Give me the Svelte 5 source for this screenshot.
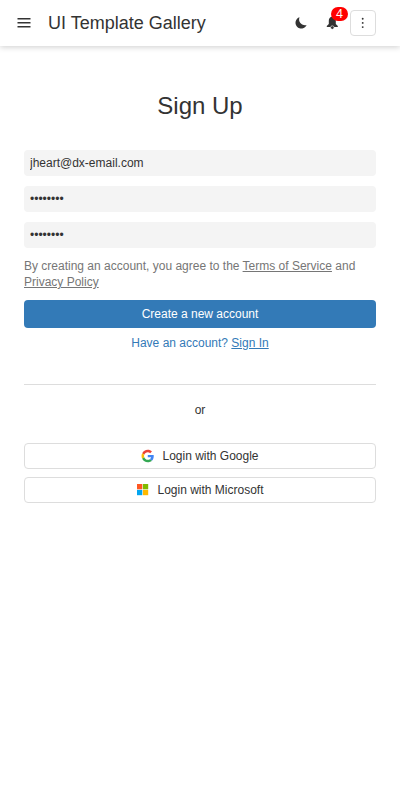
<script>
  let email = $state('jheart@dx-email.com');
  let password = $state('password');
  let confirmation = $state('password');
</script>

<div class="app">
  <header>
    <button class="icon menu" aria-label="Menu">
      <svg width="14" height="12" viewBox="0 0 14 12"><path d="M.5 1.8h13M.5 5.8h13M.5 9.8h13" stroke="#333" stroke-width="1.6" /></svg>
    </button>
    <div class="title">UI Template Gallery</div>
    <button class="icon theme" aria-label="Theme">
      <svg width="12" height="12" viewBox="0 0 12 12"><path d="M4.5.3A5.75 5.75 0 1 0 11.6 7.9C7.8 9.2 2.6 5.6 4.5.3Z" fill="#333" /></svg>
    </button>
    <button class="icon bell" aria-label="Notifications">
      <svg width="12" height="14" viewBox="0 0 12 14"><path d="M6.3.8C8.6.8 9.8 2.5 9.8 4.8V8L11.8 10V11H.8V10L2.8 8V4.8C2.8 2.5 4 .8 6.3.8Z" fill="#333" /><circle cx="6.3" cy="11.6" r="1.75" fill="#333" stroke="#fff" stroke-width=".6" /></svg>
      <span class="badge">4</span>
    </button>
    <button class="more" aria-label="More">
      <svg width="4" height="12" viewBox="0 0 4 12" fill="#333"><circle cx="1.7" cy="1.7" r=".95" /><circle cx="1.7" cy="5.9" r=".95" /><circle cx="1.7" cy="10.1" r=".95" /></svg>
    </button>
  </header>

  <main>
    <h1>Sign Up</h1>
    <form>
      <input type="email" aria-label="Email" bind:value={email} />
      <input type="password" aria-label="Password" bind:value={password} />
      <input type="password" aria-label="Confirm password" bind:value={confirmation} />
      <p class="policy">By creating an account, you agree to the <a href="#terms">Terms of Service</a> and <a href="#privacy">Privacy Policy</a></p>
      <button class="create" type="button">Create a new account</button>
      <div class="signin">Have an account? <a href="#signin">Sign In</a></div>
    </form>
    <hr />
    <div class="or">or</div>
    <button class="social">
      <svg width="13" height="14" viewBox="-2 -1 50 50">
        <path fill="#EA4335" d="M24 9.5c3.54 0 6.71 1.22 9.21 3.6l6.85-6.85C35.9 2.38 30.47 0 24 0 14.62 0 6.51 5.38 2.56 13.22l7.98 6.19C12.43 13.72 17.74 9.5 24 9.5z" />
        <path fill="#4285F4" d="M46.98 24.55c0-1.57-.15-3.09-.38-4.55H24v9.02h12.94c-.58 2.96-2.26 5.48-4.78 7.18l7.73 6c4.51-4.18 7.09-10.36 7.09-17.65z" />
        <path fill="#FBBC05" d="M10.53 28.59c-.48-1.45-.76-2.99-.76-4.59s.27-3.14.76-4.59l-7.98-6.19C.92 16.46 0 20.12 0 24c0 3.88.92 7.54 2.56 10.78l7.97-6.19z" />
        <path fill="#34A853" d="M24 48c6.48 0 11.93-2.13 15.89-5.81l-7.73-6c-2.15 1.45-4.92 2.3-8.16 2.3-6.26 0-11.57-4.22-13.47-9.91l-7.98 6.19C6.51 42.62 14.62 48 24 48z" />
      </svg>
      <span>Login with Google</span>
    </button>
    <button class="social microsoft">
      <svg width="13" height="14" viewBox="0 0 13 14">
        <path fill="#ff5722" d="M1 1h5.3v5.3H1z" /><path fill="#7fba00" d="M6.9 1h5.3v5.3H6.9z" />
        <path fill="#03a5f0" d="M1 6.9h5.3v5.3H1z" /><path fill="#ffb900" d="M6.9 6.9h5.3v5.3H6.9z" />
      </svg>
      <span>Login with Microsoft</span>
    </button>
  </main>
</div>

<style>
  .app {
    min-height: 800px;
    background: #fff;
    color: #333;
    font: 12px/16px "Liberation Sans", Arial, sans-serif;
  }
  button, input {
    box-sizing: border-box;
    margin: 0;
    padding: 0;
    border: 0;
    font: inherit;
    color: inherit;
    background: none;
  }
  svg { display: block; flex: none; }
  a { color: inherit; text-decoration: underline; }
  header {
    display: flex;
    align-items: center;
    box-sizing: border-box;
    height: 46px;
    padding: 0 24px 0 11px;
    box-shadow: 0 1px 6px rgba(0, 0, 0, 0.2);
  }
  .icon, .more {
    display: flex;
    align-items: center;
    justify-content: center;
    width: 26px;
    height: 26px;
  }
  .title { flex: 1; margin-left: 11px; font-size: 18px; line-height: 24px; }
  .theme { margin-right: 5px; }
  .bell { position: relative; margin-right: 5px; }
  .badge {
    position: absolute;
    left: 12px;
    top: -3px;
    width: 17px;
    height: 14px;
    border-radius: 7px;
    background: #f00;
    color: #fff;
    font: 12px/14px "Noto Sans", sans-serif;
    text-align: center;
  }
  .more { border: 1px solid #ddd; border-radius: 4px; }
  main { padding: 44px 24px 0; }
  h1 {
    margin: 0 0 28px;
    font-size: 24px;
    font-weight: 400;
    line-height: 32px;
    text-align: center;
  }
  form { display: flex; flex-direction: column; }
  input {
    height: 26px;
    margin-bottom: 10px;
    padding: 0 6px;
    border-radius: 4px;
    background: #f4f4f4;
    outline: 0;
  }
  .policy { margin: 0 0 10px; color: #767676; }
  .create { height: 28px; border-radius: 4px; background: #337ab7; color: #fff; }
  .signin { margin-top: 7px; color: #337ab7; text-align: center; }
  hr { height: 1px; margin: 33px 0 17px; border: 0; background: #ddd; }
  .or { margin-bottom: 25px; text-align: center; }
  .social {
    display: flex;
    align-items: center;
    justify-content: center;
    gap: 8px;
    width: 100%;
    height: 26px;
    margin-bottom: 8px;
    border: 1px solid #ddd;
    border-radius: 4px;
  }
</style>
